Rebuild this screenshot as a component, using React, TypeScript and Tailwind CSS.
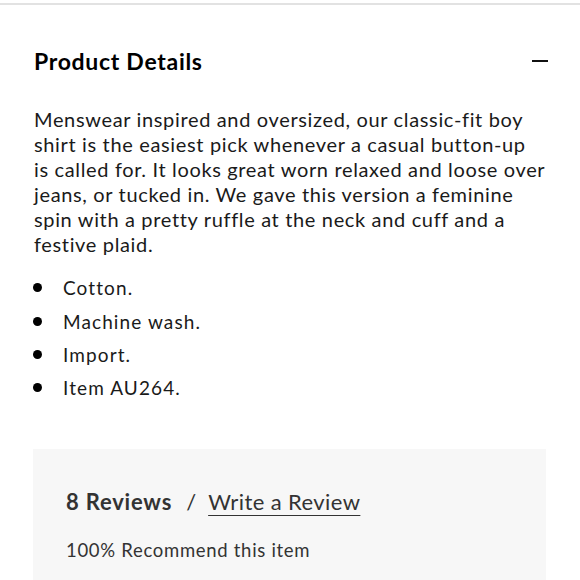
export default function App() {
  const lines = [
    'Menswear inspired and oversized, our classic-fit boy',
    'shirt is the easiest pick whenever a casual button-up',
    'is called for. It looks great worn relaxed and loose over',
    'jeans, or tucked in. We gave this version a feminine',
    'spin with a pretty ruffle at the neck and cuff and a',
    'festive plaid.',
  ];
  const bullets = ['Cotton.', 'Machine wash.', 'Import.', 'Item AU264.'];

  return (
    <div className="h-[580px] overflow-hidden bg-white font-['Lato',sans-serif] text-[#111]">
      <div className="h-[3px]" />
      <div className="h-[2px] bg-[#e2e2e2]" />
      <div className="px-[34px] pt-[41px]">
        <div className="flex items-center justify-between">
          <h3 className="text-[23px] font-bold leading-[30px] tracking-[0.7px] text-black">Product Details</h3>
          <div className="mr-[-2px] h-[2px] w-[16px] bg-[#111]" />
        </div>
        <p className="mt-[30.5px] text-[20px] leading-[25px] tracking-[0.65px] text-[#1a1a1a]">
          {lines.map((l) => (
            <span key={l} className="block whitespace-nowrap">
              {l}
            </span>
          ))}
        </p>
        <ul className="mt-[14.8px] flex flex-col">
          {bullets.map((b) => (
            <li key={b} className="flex items-center text-[19px] leading-[33.3px] tracking-[1.1px] text-[#1a1a1a]">
              <span className="ml-[-1px] mr-[21px] h-[9px] w-[9px] rounded-full bg-black" />
              {b}
            </li>
          ))}
        </ul>
      </div>
      <div className="ml-[33px] mr-[34px] mt-[44.5px] bg-[#f7f7f7] px-[33px] pb-[40px] pt-[38px]">
        <div className="flex items-center text-[22px] leading-[30px] text-[#333]">
          <span className="font-bold tracking-[0.8px]">8 Reviews</span>
          <span className="ml-[14px] mr-[12px]">/</span>
          <span className="tracking-[0.4px] underline decoration-[1px] underline-offset-[5px]">Write a Review</span>
        </div>
        <p className="mt-[20px] text-[18.5px] leading-[26px] tracking-[0.7px] text-[#333]">100% Recommend this item</p>
      </div>
    </div>
  );
}
